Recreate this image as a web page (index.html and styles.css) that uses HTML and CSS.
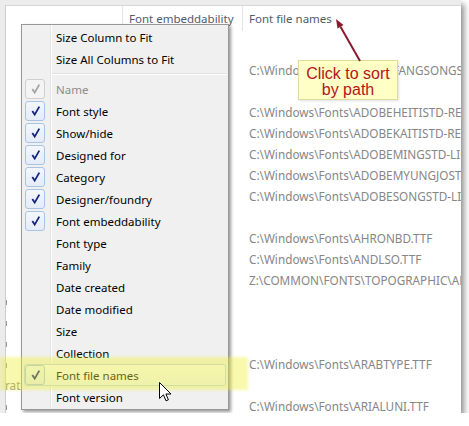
FILE: index.html
```html
<!DOCTYPE html>
<html>
<head>
<meta charset="utf-8">
<link rel="stylesheet" href="styles.css">
</head>
<body>
<div class="frame">
  <div class="pane">
    <div class="hdr">
      <div class="hc"></div>
      <div class="hc">Font embeddability</div>
      <div class="hc hc-last">Font file names</div>
    </div>
    <div class="list">
      <div class="row"><div class="c1"></div><div class="c2"></div><div class="c3"></div></div>
      <div class="row"><div class="c1"></div><div class="c2"></div><div class="c3">C:\Windows\Fonts\ADOBEFANGSONGSTD-REGULAR.OTF</div></div>
      <div class="row"><div class="c1"></div><div class="c2"></div><div class="c3"></div></div>
      <div class="row"><div class="c1"></div><div class="c2"></div><div class="c3">C:\Windows\Fonts\ADOBEHEITISTD-REGULAR.OTF</div></div>
      <div class="row"><div class="c1"></div><div class="c2"></div><div class="c3">C:\Windows\Fonts\ADOBEKAITISTD-REGULAR.OTF</div></div>
      <div class="row"><div class="c1"></div><div class="c2"></div><div class="c3">C:\Windows\Fonts\ADOBEMINGSTD-LIGHT.OTF</div></div>
      <div class="row"><div class="c1"></div><div class="c2"></div><div class="c3">C:\Windows\Fonts\ADOBEMYUNGJOSTD-MEDIUM.OTF</div></div>
      <div class="row"><div class="c1"></div><div class="c2"></div><div class="c3">C:\Windows\Fonts\ADOBESONGSTD-LIGHT.OTF</div></div>
      <div class="row"><div class="c1"></div><div class="c2"></div><div class="c3"></div></div>
      <div class="row"><div class="c1"></div><div class="c2"></div><div class="c3">C:\Windows\Fonts\AHRONBD.TTF</div></div>
      <div class="row"><div class="c1"></div><div class="c2"></div><div class="c3">C:\Windows\Fonts\ANDLSO.TTF</div></div>
      <div class="row"><div class="c1"></div><div class="c2"></div><div class="c3">Z:\COMMON\FONTS\TOPOGRAPHIC\ARABIC.OTF</div></div>
      <div class="row"><div class="c1"><span class="tick"></span></div><div class="c2"></div><div class="c3"></div></div>
      <div class="row"><div class="c1"><span class="tick"></span></div><div class="c2"></div><div class="c3"></div></div>
      <div class="row"><div class="c1"><span class="tick"></span></div><div class="c2"></div><div class="c3"></div></div>
      <div class="row"><div class="c1"><span class="tick"></span></div><div class="c2"></div><div class="c3">C:\Windows\Fonts\ARABTYPE.TTF</div></div>
      <div class="row"><div class="c1 frag">ration</div><div class="c2"></div><div class="c3"></div></div>
      <div class="row"><div class="c1"><span class="tick"></span></div><div class="c2"></div><div class="c3">C:\Windows\Fonts\ARIALUNI.TTF</div></div>
    </div>
  </div>

  <div class="callout">Click to sort<br>by path</div>

  <svg class="arrow" width="469" height="426" viewBox="0 0 469 426">
    <line x1="360" y1="61" x2="340.5" y2="26.8" stroke="#8b1a2e" stroke-width="2"/>
    <polygon points="336,19 343.5,25 337.5,28.6" fill="#8b1a2e"/>
  </svg>

  <div class="menu">
    <div class="mi"><span class="ck blank"></span><span>Size Column to Fit</span></div>
    <div class="mi"><span class="ck blank"></span><span>Size All Columns to Fit</span></div>
    <div class="sep"></div>
    <div class="mi dis"><span class="ck gray"><svg width="18" height="18" viewBox="0 0 18 18"><polyline points="6.3,9 8.7,12.6 13.3,4.6"/></svg></span><span>Name</span></div>
    <div class="mi"><span class="ck"><svg width="18" height="18" viewBox="0 0 18 18"><polyline points="6.3,9 8.7,12.6 13.3,4.6"/></svg></span><span>Font style</span></div>
    <div class="mi"><span class="ck"><svg width="18" height="18" viewBox="0 0 18 18"><polyline points="6.3,9 8.7,12.6 13.3,4.6"/></svg></span><span>Show/hide</span></div>
    <div class="mi"><span class="ck"><svg width="18" height="18" viewBox="0 0 18 18"><polyline points="6.3,9 8.7,12.6 13.3,4.6"/></svg></span><span>Designed for</span></div>
    <div class="mi"><span class="ck"><svg width="18" height="18" viewBox="0 0 18 18"><polyline points="6.3,9 8.7,12.6 13.3,4.6"/></svg></span><span>Category</span></div>
    <div class="mi"><span class="ck"><svg width="18" height="18" viewBox="0 0 18 18"><polyline points="6.3,9 8.7,12.6 13.3,4.6"/></svg></span><span>Designer/foundry</span></div>
    <div class="mi"><span class="ck"><svg width="18" height="18" viewBox="0 0 18 18"><polyline points="6.3,9 8.7,12.6 13.3,4.6"/></svg></span><span>Font embeddability</span></div>
    <div class="mi"><span class="ck blank"></span><span>Font type</span></div>
    <div class="mi"><span class="ck blank"></span><span>Family</span></div>
    <div class="mi"><span class="ck blank"></span><span>Date created</span></div>
    <div class="mi"><span class="ck blank"></span><span>Date modified</span></div>
    <div class="mi"><span class="ck blank"></span><span>Size</span></div>
    <div class="mi"><span class="ck blank"></span><span>Collection</span></div>
    <div class="mi hot"><span class="ck"><svg width="18" height="18" viewBox="0 0 18 18"><polyline points="6.3,9 8.7,12.6 13.3,4.6"/></svg></span><span>Font file names</span></div>
    <div class="mi"><span class="ck blank"></span><span>Font version</span></div>
  </div>

  <div class="glow"></div>

  <svg class="cursor" width="14" height="21" viewBox="0 0 14 21">
    <path d="M0.5,0.5 L0.5,16.5 L4.4,12.8 L7,18.8 L9.4,17.8 L6.9,12 L12,12 Z" fill="#fff" stroke="#000" stroke-width="1" stroke-linejoin="round"/>
  </svg>
</div>
</body>
</html>
```

FILE: styles.css
```css
html, body {
  margin: 0;
  padding: 0;
  background: #fff;
}

body {
  font-family: "Noto Sans", "Open Sans", sans-serif;
}

.frame {
  position: relative;
  width: 461px;
  height: 413px;
  box-sizing: border-box;
  padding: 5px 0 0 5px;
  background: #ececec;
  box-shadow: 3px 4px 6px rgba(0, 0, 0, 0.45);
}

.pane {
  height: 100%;
  box-sizing: border-box;
  background: #fff;
  border-top: 1px solid #d6d6d6;
  border-left: 1px solid #cdcdcd;
  overflow: hidden;
}

.hdr {
  display: grid;
  grid-template-columns: 117px 120px 1fr;
  height: 25px;
}

.hc {
  border-right: 1px solid #e4e4e4;
  padding-left: 6px;
  line-height: 25px;
  font-size: 11.5px;
  color: #4f5b6b;
  white-space: nowrap;
  overflow: hidden;
}

.hc-last {
  border-right: none;
}

.list {
  padding-top: 8px;
}

.row {
  display: grid;
  grid-template-columns: 117px 120px 1fr;
  height: 21px;
  line-height: 21px;
  font-size: 11.75px;
  color: #868686;
}

.c1, .c2, .c3 {
  white-space: nowrap;
  overflow: hidden;
}

.c3 {
  padding-left: 6px;
}

.frag {
  text-indent: -1px;
  color: #8a8a8a;
}

.tick {
  display: inline-block;
  width: 1px;
  height: 5px;
  background: #9a9a9a;
  vertical-align: middle;
}

.callout {
  position: absolute;
  left: 298px;
  top: 60px;
  width: 100px;
  height: 40px;
  box-sizing: border-box;
  padding-top: 5px;
  background: #ffffc6;
  border: 1px solid #dcdc9c;
  box-shadow: 1px 1px 2px rgba(0, 0, 0, 0.12);
  font-family: "Liberation Sans", Arial, sans-serif;
  font-size: 16px;
  line-height: 16px;
  text-align: center;
  color: #b3141c;
}

.arrow {
  position: absolute;
  left: 0;
  top: 0;
  pointer-events: none;
}

.menu {
  position: absolute;
  left: 21px;
  top: 24px;
  width: 208px;
  box-sizing: border-box;
  padding: 1px 2px 1px 2px;
  background:
    linear-gradient(to right, transparent 28px, #e2e3e3 28px, #e2e3e3 29px, #ffffff 29px, #ffffff 30px, transparent 30px),
    #f0f0f0;
  border: 1px solid #979797;
  box-shadow: 2px 2px 3px rgba(0, 0, 0, 0.4);
  font-size: 11.5px;
  color: #000;
}

.mi {
  display: flex;
  align-items: center;
  height: 22px;
  box-sizing: border-box;
  white-space: nowrap;
}

.mi.dis {
  color: #8d8d8d;
}

.mi.hot {
  border: 1px solid #bcd3ee;
  border-radius: 3px;
  background: linear-gradient(#fbfcfe, #eef3fb);
}

.mi.hot .ck {
  margin-left: 0;
}

.mi.hot > span:last-child {
  margin-left: 11px;
}

.ck {
  display: inline-flex;
  width: 20px;
  height: 20px;
  box-sizing: border-box;
  margin-left: 1px;
  margin-right: 11px;
  border: 1px solid #a9c3e3;
  border-radius: 3px;
  background: linear-gradient(#f3f7fd, #e4ecf8);
}

.mi.hot .ck {
  margin-right: 0;
}

.ck svg polyline {
  fill: none;
  stroke: #17247a;
  stroke-width: 1.8;
}

.ck.gray {
  border-color: #cfcfcf;
  background: #f4f4f4;
}

.ck.gray svg polyline {
  stroke: #a3a3a3;
}

.ck.blank {
  border-color: transparent;
  background: none;
}

.sep {
  height: 8px;
  margin-left: 28px;
  margin-right: 0;
  position: relative;
}

.sep::after {
  content: "";
  position: absolute;
  left: 0;
  right: 0;
  top: 3px;
  height: 1px;
  background: #e0e0e0;
  border-bottom: 1px solid #ffffff;
}

.glow {
  position: absolute;
  left: 0;
  top: 357px;
  width: 248px;
  height: 33px;
  background: rgba(240, 240, 50, 0.4);
  filter: blur(1.5px);
  pointer-events: none;
}

.cursor {
  position: absolute;
  left: 159px;
  top: 382px;
}
```
